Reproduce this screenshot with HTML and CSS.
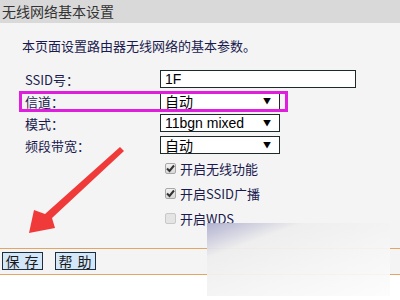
FILE: index.html
```html
<!DOCTYPE html>
<html>
    <head>
        <meta charset="utf-8">
        <title>无线网络基本设置</title>
        <link rel="stylesheet" href="styles.css">
    </head>
    <body>
        <div class="page">
            <div class="title">无线网络基本设置</div>
            <p class="intro">本页面设置路由器无线网络的基本参数。</p>
            <div class="form">
                <div class="row">
                    <span class="label">SSID号：</span>
                    <div class="field text">1F</div>
                </div>
                <div class="row">
                    <span class="label">信道：</span>
                    <div class="field select"><span>自动</span><span class="caret">▼</span></div>
                </div>
                <div class="row">
                    <span class="label">模式：</span>
                    <div class="field select"><span class="latin">11bgn mixed</span><span class="caret">▼</span></div>
                </div>
                <div class="row">
                    <span class="label">频段带宽：</span>
                    <div class="field select"><span>自动</span><span class="caret">▼</span></div>
                </div>
                <div class="check-row">
                    <span class="box"><svg width="9" height="9" viewBox="0 0 9 9"><path d="M1 4.5 L3.5 7 L8 1.5" fill="none" stroke="#333" stroke-width="2"/></svg></span>
                    <span class="check-label">开启无线功能</span>
                </div>
                <div class="check-row">
                    <span class="box"><svg width="9" height="9" viewBox="0 0 9 9"><path d="M1 4.5 L3.5 7 L8 1.5" fill="none" stroke="#333" stroke-width="2"/></svg></span>
                    <span class="check-label">开启SSID广播</span>
                </div>
                <div class="check-row">
                    <span class="box off"></span>
                    <span class="check-label">开启WDS</span>
                </div>
            </div>
            <div class="footer">
                <span class="btn">保 存</span>
                <span class="btn">帮 助</span>
            </div>
        </div>

        <!-- annotations drawn over the screenshot -->
        <div class="highlight"></div>
        <svg class="arrow" width="400" height="300" viewBox="0 0 400 300">
            <path d="M120 147 L124 151 L52 218 L55 228 L29 233 L34 210 L45 214 Z" fill="#f03a3a"/>
        </svg>
        <div class="watermark"></div>
    </body>
</html>
```

FILE: styles.css
```css
body {
    margin: 0;
    background: #ffffff;
    font-family: "Noto Sans CJK SC", "Liberation Sans", sans-serif;
    font-size: 13px;
    color: #1a1a4e;
}

.page {
    background: #f4f4f4;
}

.title {
    height: 23px;
    line-height: 23px;
    padding-left: 2px;
    background: #d9d9d9;
    color: #333333;
    font-size: 14px;
}

.intro {
    margin: 15px 0 0 0;
    padding-left: 22px;
    line-height: 16px;
    font-size: 13px;
}

.form {
    margin-top: 14px;
}

.row {
    display: flex;
    align-items: center;
    height: 22px;
}

.label {
    width: 135px;
    padding-left: 25px;
    font-size: 13px;
}

.field {
    box-sizing: border-box;
    height: 18px;
    border: 1px solid #1c2a2a;
    background: #ffffff;
    color: #000000;
    font-size: 14px;
    line-height: 16px;
    padding-left: 4px;
}

.field.text {
    width: 196px;
    font-family: "Liberation Sans", sans-serif;
}

.field.select {
    width: 120px;
    display: flex;
    justify-content: space-between;
    padding-right: 8px;
}

.latin {
    font-family: "Liberation Sans", sans-serif;
}

.caret {
    font-size: 8px;
    color: #000000;
}

.check-row {
    display: flex;
    align-items: center;
    height: 25px;
    padding-left: 165px;
}

.box {
    box-sizing: border-box;
    width: 11px;
    height: 11px;
    border: 1px solid #a8a8a8;
    border-radius: 2px;
    background: linear-gradient(#f2f2f2, #d8d8d8);
    display: flex;
    align-items: center;
    justify-content: center;
}

.box.off {
    border-color: #c8c8c8;
    background: #e4e4e4;
}

.check-label {
    margin-left: 4px;
    font-size: 13px;
}

.footer {
    margin-top: 17px;
    border-top: 1px solid #e2a564;
    border-bottom: 1px solid #e2a564;
    padding: 3px 2px 4px 2px;
    display: flex;
    gap: 12px;
}

.btn {
    box-sizing: border-box;
    height: 18px;
    width: 41px;
    border: 1px solid #1e2e3c;
    background: #d3e7f9;
    color: #1a1a1a;
    font-size: 14px;
    line-height: 16px;
    text-align: center;
    letter-spacing: 1px;
}

.highlight {
    position: absolute;
    left: 19px;
    top: 91px;
    width: 263px;
    height: 15px;
    border: 3px solid #e01ede;
}

.arrow {
    position: absolute;
    left: 0;
    top: 0;
}

.watermark {
    position: absolute;
    left: 207px;
    top: 223px;
    width: 183px;
    height: 73px;
    background: linear-gradient(160deg, rgba(170, 170, 205, 0.9) 0%, rgba(238, 238, 238, 0.95) 25%, rgba(245, 245, 245, 0.95) 60%, rgba(252, 252, 252, 0.9) 100%);
}
```
